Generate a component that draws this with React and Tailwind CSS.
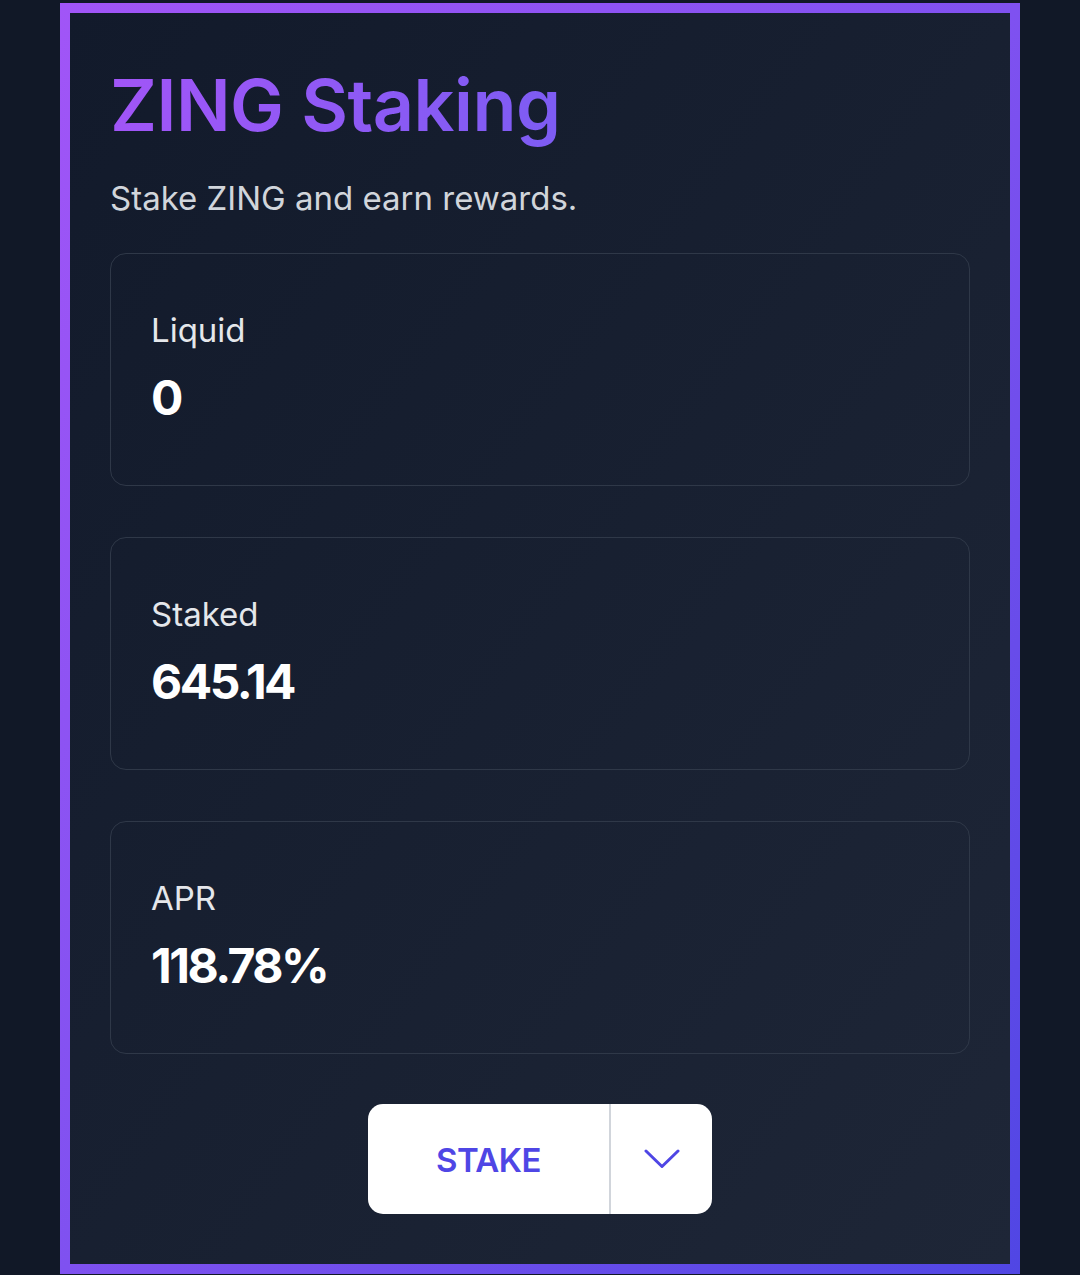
export default function App() {
  const cards = [
    { label: "Liquid", value: "0" },
    { label: "Staked", value: "645.14" },
    { label: "APR", value: "118.78%" },
  ];
  return (
    <div className="w-[1080px] h-[1275px] overflow-hidden bg-[#111827] pt-[3px]" style={{ fontFamily: "Inter, 'Noto Sans', sans-serif" }}>
      <div className="ml-[60px] w-[960px] h-[1271px] p-[10px] bg-gradient-to-br from-[#a155f7] via-[#7f51f0] to-[#5046e4]">
        <div className="w-full h-full bg-gradient-to-br from-[#121a2b] to-[#1e2637] px-10 pt-[56px]">
          <h1 className="text-[72px] leading-none pb-[14px] font-semibold tracking-[-0.5px] bg-gradient-to-r from-[#a155f7] to-[#7d5cf3] bg-clip-text text-transparent w-fit">
            ZING Staking
          </h1>
          <p className="mt-[27px] text-[33px] leading-none text-[#d1d5db]">Stake ZING and earn rewards.</p>
          <div className="mt-[38px] flex flex-col gap-[51px]">
            {cards.map((c) => (
              <div key={c.label} className="h-[233px] rounded-[16px] border border-[#2f3848] px-10 pt-[60px]">
                <div className="text-[33px] leading-none text-[#e5e7eb]">{c.label}</div>
                <div className="mt-[27px] text-[48px] leading-none font-bold text-white tracking-[-2.5px]">{c.value}</div>
              </div>
            ))}
          </div>
          <div className="mt-[50px] flex justify-center">
            <div className="w-[344px] h-[110px] bg-white rounded-[15px] flex overflow-hidden">
              <div className="w-[243px] flex items-center justify-center pt-[3px] text-[33px] font-semibold tracking-[-0.5px] text-[#4f46e5] border-r-2 border-[#d1d5db]">
                STAKE
              </div>
              <div className="flex-1 flex items-center justify-center">
                <svg width="36" height="20" viewBox="0 0 36 20" fill="none">
                  <path d="M2 2 L18 17.5 L34 2" stroke="#4f46e5" strokeWidth="3" strokeLinecap="round" strokeLinejoin="round" />
                </svg>
              </div>
            </div>
          </div>
        </div>
      </div>
    </div>
  );
}
